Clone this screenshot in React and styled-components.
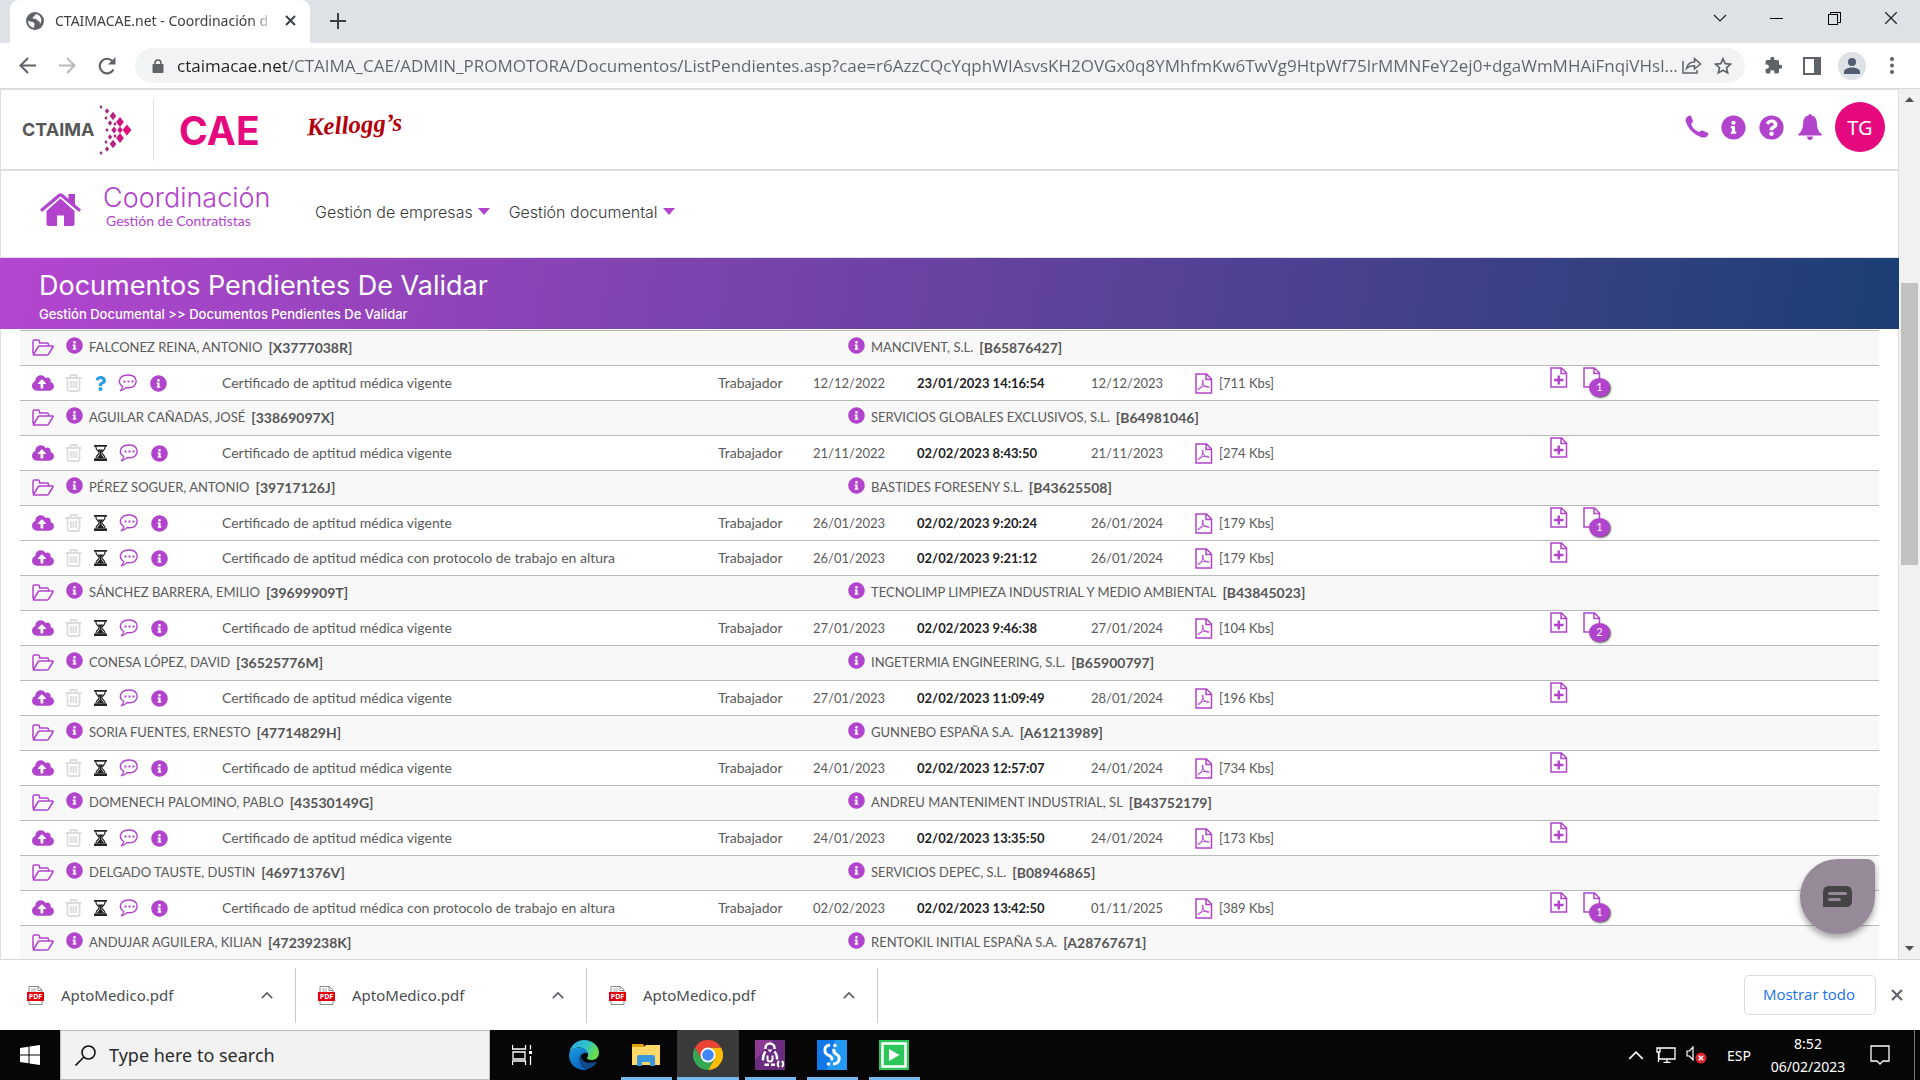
import React from "react";
import styled, { createGlobalStyle, css } from "styled-components";
import {
  FaInfoCircle,
  FaQuestionCircle,
  FaQuestion,
  FaCloudUploadAlt,
} from "react-icons/fa";

const purple = "#b143cc";
const grey = "#5f6368";
const line = "#dedee0";
const uiFont = `"Noto Sans", "Open Sans", sans-serif`;
const bodyFont = `Lato, "Open Sans", sans-serif`;
const headFont = `Inter, Lato, sans-serif`;

const GlobalStyle = createGlobalStyle`
  *, *::before, *::after { box-sizing: border-box; }
  body { margin: 0; background: #fff; color: #555; font-family: ${bodyFont}; font-size: 13px; }
  button { font: inherit; color: inherit; background: none; border: 0; padding: 0; margin: 0; cursor: pointer; }
  a { color: inherit; text-decoration: none; }
  svg { display: block; flex: none; }
  h1, h2, p { margin: 0; font-weight: 400; }
`;

const Screen = styled.div`
  display: flex;
  flex-direction: column;
  height: 100vh;
  overflow: hidden;
`;

/* ---------- browser chrome ---------- */
const TabStrip = styled.div`
  display: flex;
  align-items: stretch;
  height: 43px;
  flex: none;
  padding-left: 10px;
  background: #dee1e6;
  font-family: ${uiFont};
`;
const Tab = styled.div`
  display: flex;
  align-items: center;
  width: 300px;
  padding: 0 12px 2px 16px;
  border-radius: 9px 9px 0 0;
  background: #fff;
  color: #3c4043;
  font-size: 14px;
`;
const TabTitle = styled.span`
  flex: 1;
  margin: 0 8px 0 11px;
  white-space: nowrap;
  mask-image: linear-gradient(90deg, #000 90%, transparent);
`;
const IconButton = styled.button`
  display: flex;
  align-items: center;
  justify-content: center;
  flex: none;
  width: ${(p) => p.$w || 40}px;
  height: ${(p) => p.$h || 35}px;
  color: ${(p) => p.$color || grey};
`;
const Spacer = styled.div`
  flex: 1;
`;
const Toolbar = styled.div`
  display: flex;
  align-items: center;
  height: 46px;
  flex: none;
  padding: 0 8px 0 7px;
  border-bottom: 1px solid #d9dadc;
  background: #fff;
`;
const AddressBar = styled.label`
  display: flex;
  align-items: center;
  flex: 1;
  height: 35px;
  margin: 0 9px 0 8px;
  padding: 0 2px 0 17px;
  border-radius: 18px;
  background: #f1f3f4;
`;
const AddressInput = styled.input`
  flex: 1;
  min-width: 0;
  height: 35px;
  margin-left: 13px;
  padding: 0;
  border: 0;
  outline: 0;
  color: transparent;
  background: linear-gradient(90deg, #202124 111px, #5f6368 111px);
  background-clip: text;
  font-family: "Open Sans", sans-serif;
  font-size: 17px;
`;
const Avatar = styled.span`
  display: flex;
  align-items: center;
  justify-content: center;
  width: 28px;
  height: 28px;
  border-radius: 50%;
  background: #dee1e6;
`;

/* ---------- page ---------- */
const Viewport = styled.div`
  display: flex;
  flex: 1;
  min-height: 0;
`;
const Page = styled.main`
  display: flex;
  flex-direction: column;
  flex: 1;
  min-width: 0;
  overflow: hidden;
`;
const Header = styled.header`
  display: flex;
  align-items: center;
  height: 81px;
  flex: none;
  padding: 0 13px 0 21px;
  border: 1px solid ${line};
`;
const Brand = styled.div`
  display: flex;
  align-items: center;
  gap: 5px;
  width: 132px;
  height: 62px;
  border-right: 1px solid ${line};
  color: #575756;
  font: 700 18px ${headFont};
`;
const Product = styled.span`
  margin-left: 25px;
  padding-top: 2px;
  color: #e5087e;
  font: 700 39px ${headFont};
`;
const Client = styled.span`
  margin-left: 47px;
  padding-bottom: 10px;
  color: #b3000c;
  font: italic 700 25px "Liberation Serif", serif;
  transform: rotate(-3deg);
`;
const HeaderTools = styled.div`
  display: flex;
  align-items: center;
  gap: 12px;
  margin-bottom: 5px;
`;
const UserBadge = styled.button`
  width: 50px;
  height: 50px;
  border-radius: 50%;
  background: #e5087e;
  color: #fff;
  font: 400 20px ${uiFont};
`;
const Nav = styled.nav`
  display: flex;
  align-items: center;
  height: 88px;
  flex: none;
  padding: 0 39px 12px;
  border: 1px solid ${line};
`;
const HomeLink = styled.a`
  padding-top: 3px;
`;
const Section = styled.div`
  width: 212px;
  margin-left: 22px;
  padding-bottom: 4px;
  color: ${purple};
`;
const SectionTitle = styled.h2`
  font: 300 27px/30px ${headFont};
`;
const SectionSub = styled.p`
  padding-left: 3px;
  font-size: 14px;
  line-height: 16px;
`;
const MenuButton = styled.button`
  display: flex;
  align-items: center;
  gap: 5px;
  margin: 7px 19px 0 0;
  color: #3a3a3a;
  font: 300 16px/20px ${headFont};
  &::after {
    content: "";
    border: 6px solid transparent;
    border-top: 7px solid ${purple};
    border-bottom: 0;
  }
`;
const Banner = styled.section`
  height: 71px;
  flex: none;
  padding: 11px 39px 0;
  background: linear-gradient(100deg, #b446d0, #1b3f73);
  color: #fff;
`;
const BannerTitle = styled.h1`
  font: 400 27px/34px ${headFont};
`;
const Crumbs = styled.p`
  padding-top: 1px;
  font: 500 13px/20px ${headFont};
`;
const ListArea = styled.section`
  flex: 1;
  min-height: 0;
  overflow: hidden;
  padding: 1px 19px 0;
  border: solid ${line};
  border-width: 0 1px;
`;
const Table = styled.table`
  width: 100%;
  table-layout: fixed;
  border-spacing: 0;
`;
const Row = styled.tr`
  height: 35px;
  background: ${(p) => (p.$group ? "#f8f8f8" : "#fff")};
`;
const Cell = styled.td`
  height: 35px;
  padding: 0 0 ${(p) => (p.$group || p.$large ? 2 : 0)}px ${(p) => (p.$indent ? 47 : 12)}px;
  border-top: 1px solid #b9b9b9;
  white-space: nowrap;
  color: ${(p) => (p.$strong ? "#222" : "#5a5a5a")};
  font-size: ${(p) => (p.$large ? 14 : 13)}px;
  font-weight: ${(p) => (p.$strong ? 700 : 400)};
`;
const Line = styled.div`
  display: flex;
  align-items: center;
  gap: ${(p) => p.$gap}px;
`;
const Tool = styled.button`
  display: flex;
  justify-content: ${(p) => (p.$start ? "flex-start" : "center")};
  width: ${(p) => p.$w}px;
  padding-bottom: ${(p) => (p.$raised ? 4 : 0)}px;
  color: ${(p) => p.$color || purple};
`;
const Code = styled.strong`
  color: #555;
  font-size: 14px;
`;
const Attachments = styled.div`
  display: flex;
  gap: 15px;
  height: 34px;
`;
const AttachButton = styled.button`
  position: relative;
  width: 18px;
  height: 22px;
`;
const Count = styled.span`
  position: absolute;
  left: 6px;
  top: 12px;
  width: 21px;
  height: 19px;
  border-radius: 50%;
  background: ${purple};
  box-shadow: 1px 1px 2px #555;
  color: #fff;
  font-size: 11px;
  line-height: 17px;
  text-align: center;
`;
const ChatButton = styled.button`
  position: fixed;
  right: 45px;
  bottom: 146px;
  display: flex;
  align-items: center;
  justify-content: center;
  width: 75px;
  height: 75px;
  border-radius: 50% 8px 50% 50%;
  background: #978a98;
  box-shadow: 0 4px 6px rgba(0, 0, 0, 0.35);
`;
const ScrollTrack = styled.div`
  display: flex;
  flex-direction: column;
  align-items: center;
  width: 21px;
  background: #f1f1f1;
`;
const ScrollPart = styled.div`
  width: 17px;
  flex: ${(p) => p.$part};
  background: ${(p) => (p.$thumb ? "#c1c1c1" : "transparent")};
`;

/* ---------- downloads ---------- */
const Downloads = styled.footer`
  display: flex;
  align-items: center;
  height: 71px;
  flex: none;
  padding-right: 8px;
  border-top: 1px solid #d5d6d8;
  background: #fff;
  font-family: ${uiFont};
`;
const Download = styled.div`
  display: flex;
  align-items: center;
  width: ${(p) => (p.$first ? 296 : 291)}px;
  height: 55px;
  padding: 0 8px 0 ${(p) => (p.$first ? 27 : 22)}px;
  border-right: 1px solid #c8c9cb;
`;
const FileLink = styled.a`
  display: flex;
  align-items: center;
  flex: 1;
  gap: 17px;
  color: #4a4d51;
  font-size: 15px;
`;
const ShowAll = styled.button`
  width: 132px;
  height: 40px;
  margin-right: 6px;
  padding: 0 2px 2px 0;
  border: 1px solid #dadce0;
  border-radius: 5px;
  color: #1a73e8;
  font-family: "Open Sans", sans-serif;
  font-size: 15px;
`;

/* ---------- taskbar ---------- */
const Taskbar = styled.div`
  display: flex;
  align-items: stretch;
  height: 50px;
  flex: none;
  background: #060606;
  color: #fff;
  font-family: ${uiFont};
`;
const SearchBox = styled.label`
  display: flex;
  align-items: center;
  gap: 13px;
  width: 430px;
  margin-right: 1px;
  padding-left: 14px;
  border: 1px solid #bcbcbc;
  background: #f2f2f2;
`;
const SearchInput = styled.input`
  flex: 1;
  border: 0;
  outline: 0;
  padding: 0;
  background: none;
  font: 400 18px ${uiFont};
  &::placeholder {
    color: #2b2b2b;
    opacity: 1;
  }
`;
const AppButton = styled.button`
  display: flex;
  align-items: center;
  justify-content: center;
  width: 62px;
  height: 50px;
  background: ${(p) => (p.$active ? "#3a3a3a" : "none")} padding-box;
  ${(p) =>
    p.$open &&
    css`
      background-image: linear-gradient(#76b9ed, #76b9ed);
      background-repeat: no-repeat;
      background-position: bottom;
      background-size: ${p.$active ? 62 : 51}px 3px;
    `}
`;
const Language = styled.button`
  margin: 0 19px 0 15px;
  font-size: 14px;
`;
const Clock = styled.time`
  display: flex;
  flex-direction: column;
  justify-content: center;
  width: 76px;
  text-align: center;
  font-size: 14px;
  line-height: 23px;
  white-space: nowrap;
`;
const DesktopEdge = styled.button`
  width: 6px;
  border-left: 1px solid #777;
`;

/* ---------- drawings ---------- */
const Stroke = ({ w, h = w, box, sw = 2, children, ...rest }) => (
  <svg width={w} height={h} viewBox={box || `0 0 ${w} ${h}`} fill="none" stroke="currentColor" strokeWidth={sw} {...rest}>
    {children}
  </svg>
);
const Globe = () => (
  <svg width="18" height="18" viewBox="0 0 18 18">
    <circle cx="9" cy="9" r="9" fill={grey} />
    <path d="M2.2 8.5c2.300 2 4.800.8 6 2.600 1 1.600-.4 2.200 0 4.700C4.500 15.300 2 12.400 2.200 8.500zM10 2c-1.500 1-.8 2.200-2.600 2.800-1.300.5-.8 1.700.4 2 1.700.4 2.600-.2 3.400 1.200.7 1.200 1.600.9 2.400 2.100.5.800.3 1.700-.2 2.600C16.600 9.600 15.900 3.500 10 2z" fill="#fff" />
  </svg>
);
const Cross = ({ size = 11, sw = 2 }) => (
  <Stroke w={size} box="0 0 11 11" sw={sw}><path d="M1 1l9 9M10 1l-9 9" /></Stroke>
);
const Chevron = ({ up, w = 14, sw = 2 }) => (
  <Stroke w={w} h={w / 2 + 1} box="0 0 14 8" sw={sw}><path d={up ? "M1 7l6-6 6 6" : "M1 1l6 6 6-6"} /></Stroke>
);
const BrandMark = () => {
  const dots = [
    [2, 2, 3], [8, 6, 4], [14, 11, 6], [21, 17, 7], [28, 25, 8], [21, 33, 7], [14, 39, 6], [8, 44, 4], [2, 48, 3],
    [7, 13, 3], [11, 18, 4], [15, 25, 5], [11, 32, 4], [7, 37, 3], [8, 25, 3], [16, 19, 3], [16, 31, 3], [21, 25, 5],
  ];
  return (
    <svg width="34" height="50" viewBox="0 0 34 50">
      <defs>
        <linearGradient id="mark" x1="0" x2="34" y1="0" y2="0" gradientUnits="userSpaceOnUse">
          <stop stopColor="#84408a" /><stop offset=".8" stopColor="#e5087e" />
        </linearGradient>
      </defs>
      <path fill="url(#mark)" d={dots.map(([x, y, r]) => `M${x} ${y - r * 0.7}l${r * 0.55} ${r * 0.7}l${-r * 0.55} ${r * 0.7}l${-r * 0.55} ${-r * 0.7}z`).join("")} />
    </svg>
  );
};
const Phone = () => (
  <svg width="24" height="24" viewBox="0 0 24 24" fill={purple}>
    <path d="M1.500 2.500C3 1 5.500 0 6 1l2 5c.3 1-1.600 2-1.800 3 .7 3.400 4.500 7 8 8 1.200 0 2.300-2 3.300-1.600L23 18c1 .6.300 2-.7 3-1.200 1.300-3.300 1.900-5.300 1.400C9 20 2.500 13 .8 6.200.5 4.800.7 3.300 1.500 2.500z" />
  </svg>
);
const Bell = () => (
  <svg width="24" height="26" viewBox="0 0 24 26" fill={purple}>
    <path d="M12 0q1.500 0 1.500 1.600C17 2.300 18.600 5 18.800 8c.2 6 1.200 9.500 5 12.200q.3 1.300-1 1.300H1.200q-1.300 0-1-1.300C4 17.500 5 14 5.200 8 5.400 5 7 2.300 10.500 1.600 10.500.5 11 0 12 0z" />
    <path d="M9 22.500h6q-.4 3.500-3 3.500t-3-3.500z" />
  </svg>
);
const House = () => (
  <svg width="41" height="34" viewBox="0 0 41 34" fill={purple}>
    <path d="M20.500 5.500L34.500 18v13q0 2-2 2H24V22.500h-7V33H8.500q-2 0-2-2V18z" />
    <path d="M0 16.500L18 1.200q2.500-2 5 0L28.500 6V1H35v10.500l6 5-1.800 2.500L20.500 3.500 2 19z" />
  </svg>
);
const Folder = () => (
  <Stroke w={22} h={17} sw={1.5} strokeLinejoin="round"><path d="M1 14.500V2.500Q1 1 2.500 1H6q1.500 0 1.500 1.500V4H15q1.500 0 1.500 1.500V7M1.500 15.500L6 8q.6-1 1.800-1H20.500q1 0 .4 1L17 14.500q-.7 1.500-2 1.500H2q-1 0-.5-.5z" /></Stroke>
);
const Trash = () => (
  <Stroke w={17} h={18} sw={1.8}><path d="M.5 4h16M5.500 3.500V1h6v2.500M2.500 4.500V15q0 2 2 2h8q2 0 2-2V4.500M5.800 7v7M8.500 7v7M11.200 7v7" /></Stroke>
);
const Hourglass = () => (
  <svg width="13" height="16" viewBox="0 0 13 16" fill="#222">
    <path d="M0 0h13v1.800H0zM0 13.500h13V16H0z" />
    <path d="M1.800 1.500c0 4 3.200 4.500 3.500 6.300-.3 1.700-3.500 2.200-3.500 6M11.200 1.500c0 4-3.200 4.500-3.500 6.300.3 1.700 3.500 2.200 3.500 6" fill="none" stroke="#222" strokeWidth="1.200" />
    <path d="M3.500 4.500h6L7 7.200V9l3.500 4.500h-8L6 9V7.200z" />
  </svg>
);
const Comment = () => (
  <Stroke w={21} h={18} sw={1.4}>
    <path d="M4.800 12.500C-1 9 .5 1.200 10.500 1S21 13.500 10.500 13.800c-1 0-1.800 0-2.500-.2-1.500 1.800-3.500 2.800-6 3.200 1.500-1 2.600-2.600 2.800-4.300z" />
    <path d="M5.500 7.500h2M9.500 7.500h2M13.500 7.500h2" strokeWidth="2" />
  </Stroke>
);
const Sheet = ({ kind }) => (
  <Stroke w={18} h={21} sw={1.5} color={purple}>
    <path d="M1 1h10.500L16.500 6v14H1zM11 1v5.500h5.500" />
    {kind === "plus" && <path d="M4 13h9.500M8.750 8.500v9" strokeWidth="2.400" />}
    {kind === "pdf" && <path d="M7.500 7c1.500 0 0 4.500-1 6.500S3.500 17.500 3 16.500s3-2.500 5.500-3 5.500-.3 5.500.6-3.500-.1-5-2S7 7 7.500 7z" strokeWidth="1" />}
  </Stroke>
);
const PdfFile = () => (
  <svg width="17" height="19" viewBox="0 0 17 19">
    <path d="M2 .5h9.500L15 4v14.500H2zM11 .5V4.500h4" fill="#fff" stroke="#8a8a8a" />
    <path d="M4 3h5M4 5h5" stroke="#aaa" />
    <path d="M0 6h17v9H0z" fill="#e2000f" />
    <text x="8.500" y="13" fill="#fff" fontFamily="Open Sans" fontWeight="700" fontSize="7" textAnchor="middle">PDF</text>
  </svg>
);
const EdgeLogo = () => (
  <svg width="30" height="30" viewBox="0 0 30 30">
    <defs>
      <linearGradient id="eg" x1="0" x2="1" y2=".4"><stop stopColor="#2aa5ea" /><stop offset=".6" stopColor="#2fc4c8" /><stop offset="1" stopColor="#6bdc4b" /></linearGradient>
      <linearGradient id="eb" x1="0" x2=".6" y1="0" y2="1"><stop stopColor="#1b9de2" /><stop offset="1" stopColor="#0a62bd" /></linearGradient>
    </defs>
    <path d="M.3 13C1.500 5.500 7.500 0 15 0c8.500 0 15 6 15 12.500 0 5-3.500 7.500-7.500 7.500-3.200 0-5-1.200-4.500-2.300 1-1 1.300-2 1-3.500C18 10 14 7.500 10 7.500 5.500 7.500 1.500 10 .3 13z" fill="url(#eg)" />
    <path d="M0 15C.5 10.500 5 7.500 10 7.500c5 0 8.500 3 9 6-2-1.500-6.500-.5-8 3.500-1.500 5 2 11 8 12-1.300.7-3 1-4 1C6.500 30 0 23.500 0 15z" fill="url(#eb)" />
    <path d="M10.500 17c-1.500 5.500 3 10.500 8 12 4-.7 7.500-3.500 9-6.500.4-.8-.3-1.200-1-.8-3.500 2-14 2-14.500-5.700z" fill="#114a8b" />
  </svg>
);
const Explorer = () => (
  <svg width="28" height="24" viewBox="0 0 28 24">
    <path d="M0 1h11l2 3H0z" fill="#e3a000" />
    <path d="M0 4h12l2-2h14v20H0z" fill="#ffd868" />
    <path d="M5 23V14q0-2 2-2h14q2 0 2 2v9h-5v-4h-8v4z" fill="#3a96dd" />
  </svg>
);
const ChromeLogo = () => (
  <svg width="30" height="30" viewBox="0 0 30 30">
    <path d="M15 7.500H28A15 15 0 0 1 15 30l6.500-11.300z" fill="#fbbc05" />
    <path d="M2 7.500A15 15 0 0 0 15 30l6.500-11.300H8.500z" fill="#34a853" />
    <path d="M8.500 18.700L2 7.500A15 15 0 0 1 28 7.500H15z" fill="#ea4335" />
    <circle cx="15" cy="15" r="7.500" fill="#fff" />
    <circle cx="15" cy="15" r="5.800" fill="#4285f4" />
  </svg>
);
const PenguinApp = () => (
  <svg width="30" height="30" viewBox="0 0 30 30" fill="none" stroke="#fff">
    <path d="M0 0h30v30H0z" fill="#6b2c80" stroke="none" />
    <path d="M0 0h18L0 20z" fill="#8e3a94" stroke="none" />
    <path d="M10.500 9V8a4.500 4.500 0 0 1 9 0v1" strokeWidth="2.500" />
    <path d="M12.500 9.500h5L15 12.500z" fill="#fff" stroke="none" />
    <path d="M10.500 11.500q-2.500 3-2.500 7v2M19.500 11.500q2.500 3 2.500 6v2" strokeWidth="2.500" />
    <path d="M12.500 15.500v3.500a2.500 2.500 0 0 0 5 0V15.500" strokeWidth="2" />
    <path d="M9.500 24.800h4.500M16 24.800h4" strokeWidth="2.500" />
    <path d="M24 21q-2.500 3 0 6M27 21q2.500 3 0 6" strokeWidth="2" />
  </svg>
);
const SwirlApp = () => (
  <svg width="30" height="30" viewBox="0 0 30 30" fill="none" stroke="#fff" strokeWidth="3">
    <path d="M0 0h30v30H0z" fill="#1178e8" stroke="none" />
    <path d="M18 0h12v30H10z" fill="#2299f2" stroke="none" />
    <path d="M13 5Q7 6 8 11q0 3 5 5 3 2 1 4" />
    <path d="M17 9q-1 3 2 5 4 2 3 6-1 4-6 4" />
    <circle cx="18" cy="5.500" r="1.800" fill="#fff" stroke="none" />
    <circle cx="11.500" cy="24" r="1.800" fill="#fff" stroke="none" />
  </svg>
);
const PlayApp = () => (
  <svg width="30" height="30" viewBox="0 0 30 30">
    <path d="M0 0h30v30H0z" fill="#2dc65b" />
    <path d="M3.500 3.500h23v23h-23z" fill="none" stroke="#fff" strokeWidth="2.500" />
    <path d="M10 9l10.500 6L10 21z" fill="#fff" />
  </svg>
);

/* ---------- data ---------- */
const cert = "Certificado de aptitud médica vigente";
const certHeight = "Certificado de aptitud médica con protocolo de trabajo en altura";
const groups = [
  ["FALCONEZ REINA, ANTONIO", "X3777038R", "MANCIVENT, S.L.", "B65876427", [[cert, "12/12/2022", "23/01/2023 14:16:54", "12/12/2023", 711, 1, true]]],
  ["AGUILAR CAÑADAS, JOSÉ", "33869097X", "SERVICIOS GLOBALES EXCLUSIVOS, S.L.", "B64981046", [[cert, "21/11/2022", "02/02/2023 8:43:50", "21/11/2023", 274]]],
  ["PÉREZ SOGUER, ANTONIO", "39717126J", "BASTIDES FORESENY S.L.", "B43625508", [
    [cert, "26/01/2023", "02/02/2023 9:20:24", "26/01/2024", 179, 1],
    [certHeight, "26/01/2023", "02/02/2023 9:21:12", "26/01/2024", 179],
  ]],
  ["SÁNCHEZ BARRERA, EMILIO", "39699909T", "TECNOLIMP LIMPIEZA INDUSTRIAL Y MEDIO AMBIENTAL", "B43845023", [[cert, "27/01/2023", "02/02/2023 9:46:38", "27/01/2024", 104, 2]]],
  ["CONESA LÓPEZ, DAVID", "36525776M", "INGETERMIA ENGINEERING, S.L.", "B65900797", [[cert, "27/01/2023", "02/02/2023 11:09:49", "28/01/2024", 196]]],
  ["SORIA FUENTES, ERNESTO", "47714829H", "GUNNEBO ESPAÑA S.A.", "A61213989", [[cert, "24/01/2023", "02/02/2023 12:57:07", "24/01/2024", 734]]],
  ["DOMENECH PALOMINO, PABLO", "43530149G", "ANDREU MANTENIMENT INDUSTRIAL, SL", "B43752179", [[cert, "24/01/2023", "02/02/2023 13:35:50", "24/01/2024", 173]]],
  ["DELGADO TAUSTE, DUSTIN", "46971376V", "SERVICIOS DEPEC, S.L.", "B08946865", [[certHeight, "02/02/2023", "02/02/2023 13:42:50", "01/11/2025", 389, 1]]],
  ["ANDUJAR AGUILERA, KILIAN", "47239238K", "RENTOKIL INITIAL ESPAÑA S.A.", "A28767671", []],
];
const columns = [190, 496, 95, 104, 174, 104, 355];

const GroupRow = ({ group: [person, id, company, cif] }) => (
  <Row $group>
    <Cell colSpan={3} $group>
      <Line $gap={6}>
        <Tool $w={28} $start aria-label="Abrir carpeta"><Folder /></Tool>
        <Tool $w={17} $raised aria-label="Información"><FaInfoCircle size={17} /></Tool>
        <span>{person}</span>
        <Code>[{id}]</Code>
      </Line>
    </Cell>
    <Cell colSpan={5} $group $indent>
      <Line $gap={6}>
        <Tool $w={17} $raised aria-label="Información"><FaInfoCircle size={17} /></Tool>
        <span>{company}</span>
        <Code>[{cif}]</Code>
      </Line>
    </Cell>
  </Row>
);

const DocumentRow = ({ doc: [name, issued, sent, expires, size, notes, query] }) => (
  <Row>
    <Cell>
      <Line $gap={11}>
        <Tool $w={22} aria-label="Subir"><FaCloudUploadAlt size={22} /></Tool>
        <Tool $w={17} $color="#dcdcdc" aria-label="Eliminar"><Trash /></Tool>
        <Tool $w={query ? 14 : 15} $color="#2e9be6" aria-label="Estado">{query ? <FaQuestion size={15} /> : <Hourglass />}</Tool>
        <Tool $w={21} aria-label="Comentarios"><Comment /></Tool>
        <Tool $w={17} aria-label="Información"><FaInfoCircle size={17} /></Tool>
      </Line>
    </Cell>
    <Cell $large>{name}</Cell>
    <Cell $large>Trabajador</Cell>
    <Cell>{issued}</Cell>
    <Cell $strong>{sent}</Cell>
    <Cell>{expires}</Cell>
    <Cell>
      <Line as="a" href="#pdf" $gap={6}><Sheet kind="pdf" />[{size} Kbs]</Line>
    </Cell>
    <Cell>
      <Attachments>
        <AttachButton aria-label="Añadir nota"><Sheet kind="plus" /></AttachButton>
        {notes && <AttachButton aria-label="Notas"><Sheet /><Count>{notes}</Count></AttachButton>}
      </Attachments>
    </Cell>
  </Row>
);

export default function App() {
  return (
    <Screen>
      <GlobalStyle />
      <TabStrip>
        <Tab>
          <Globe />
          <TabTitle>CTAIMACAE.net - Coordinación d</TabTitle>
          <IconButton $w={16} $h={16} $color="#3c4043" aria-label="Cerrar pestaña"><Cross /></IconButton>
        </Tab>
        <IconButton $w={55} $h={42} $color="#3c4043" aria-label="Nueva pestaña">
          <Stroke w={16}><path d="M8 0v16M0 8h16" /></Stroke>
        </IconButton>
        <Spacer />
        <IconButton $w={57} $color="#222" aria-label="Buscar pestañas"><Chevron sw={1.2} /></IconButton>
        <IconButton $w={57} $color="#000" aria-label="Minimizar"><Stroke w={13} sw={1} shapeRendering="crispEdges"><path d="M0 7h13" /></Stroke></IconButton>
        <IconButton $w={57} $color="#000" aria-label="Restaurar"><Stroke w={14} sw={1} shapeRendering="crispEdges"><path d="M1 3h9v10H1zM3 3V1h10v10h-3" /></Stroke></IconButton>
        <IconButton $w={58} $color="#222" aria-label="Cerrar"><Cross size={14} sw={1} /></IconButton>
      </TabStrip>
      <Toolbar>
        <IconButton aria-label="Atrás"><Stroke w={17}><path d="M17 8.500H2M9 1L1.500 8.500 9 16" /></Stroke></IconButton>
        <IconButton $color="#b8babd" aria-label="Adelante"><Stroke w={17}><path d="M0 8.500h15M8 1l7.500 7.500L8 16" /></Stroke></IconButton>
        <IconButton aria-label="Recargar"><Stroke w={18} sw={2.2}><path d="M15.500 12.500A7.300 7.300 0 1 1 14.500 4.200" /><path d="M17.500 0v7.500H10z" fill="currentColor" stroke="none" /></Stroke></IconButton>
        <AddressBar>
          <svg width="12" height="14" viewBox="0 0 12 14"><path d="M3 6V4a3 3 0 0 1 6 0v2" fill="none" stroke={grey} strokeWidth="1.600" /><rect y="5" x=".5" width="11" height="9" rx="1.200" fill={grey} /></svg>
          <AddressInput aria-label="Dirección" readOnly value="ctaimacae.net/CTAIMA_CAE/ADMIN_PROMOTORA/Documentos/ListPendientes.asp?cae=r6AzzCQcYqphWIAsvsKH2OVGx0q8YMhfmKw6TwVg9HtpWf75lrMMNFeY2ej0+dgaWmMHAiFnqiVHsl..." />
          <IconButton $w={22} aria-label="Compartir"><Stroke w={20} h={17} sw={1.5}><path d="M1 4v12h14v-3M4.500 11.500C5.500 7 8 5 12.500 5V1.500L18.500 7l-6 5V8.800C9 8.700 6.500 9.500 4.500 11.500z" /></Stroke></IconButton>
          <IconButton aria-label="Favorito"><Stroke w={18} sw={1.7}><path d="M9 1.800l2.200 4.800 5.200.6-3.900 3.500 1.100 5.200L9 13.200l-4.600 2.700 1.100-5.200L1.600 7.200l5.200-.6z" /></Stroke></IconButton>
        </AddressBar>
        <IconButton $w={38} aria-label="Extensiones">
          <svg width="19" height="19" viewBox="0 0 24 24" fill={grey}><path d="M20.500 11H19V7a2 2 0 0 0-2-2h-4V3.500a2.500 2.500 0 0 0-5 0V5H4a2 2 0 0 0-2 2v3.800h1.500a2.700 2.700 0 0 1 0 5.400H2V20a2 2 0 0 0 2 2h3.800v-1.500a2.700 2.700 0 0 1 5.400 0V22H17a2 2 0 0 0 2-2v-4h1.500a2.500 2.500 0 0 0 0-5z" /></svg>
        </IconButton>
        <IconButton aria-label="Panel lateral"><Stroke w={18} ><path d="M1 1h16v16H1z" /><path d="M11 0h7v18h-7z" fill="currentColor" stroke="none" /></Stroke></IconButton>
        <IconButton aria-label="Perfil">
          <Avatar><svg width="16" height="16" viewBox="0 0 16 16" fill="#515c72"><circle cx="8" cy="4" r="4" /><path d="M0 16v-2c0-3 4-4.500 8-4.500s8 1.500 8 4.500v2z" /></svg></Avatar>
        </IconButton>
        <IconButton aria-label="Menú"><svg width="4" height="17" fill={grey}><circle cx="2" cy="2" r="2" /><circle cx="2" cy="8.500" r="2" /><circle cx="2" cy="15" r="2" /></svg></IconButton>
      </Toolbar>

      <Viewport>
        <Page>
          <Header>
            <Brand>CTAIMA<BrandMark /></Brand>
            <Product>CAE</Product>
            <Client>Kellogg’s</Client>
            <Spacer />
            <HeaderTools>
              <Tool $w={25} aria-label="Teléfono"><Phone /></Tool>
              <Tool $w={25} aria-label="Información"><FaInfoCircle size={25} /></Tool>
              <Tool $w={26} aria-label="Ayuda"><FaQuestionCircle size={25} /></Tool>
              <Tool $w={27} aria-label="Avisos"><Bell /></Tool>
              <UserBadge>TG</UserBadge>
            </HeaderTools>
          </Header>
          <Nav>
            <HomeLink href="#inicio" aria-label="Inicio"><House /></HomeLink>
            <Section>
              <SectionTitle>Coordinación</SectionTitle>
              <SectionSub>Gestión de Contratistas</SectionSub>
            </Section>
            <MenuButton>Gestión de empresas</MenuButton>
            <MenuButton>Gestión documental</MenuButton>
          </Nav>
          <Banner>
            <BannerTitle>Documentos Pendientes De Validar</BannerTitle>
            <Crumbs>Gestión Documental &gt;&gt; Documentos Pendientes De Validar</Crumbs>
          </Banner>
          <ListArea>
            <Table>
              <colgroup>
                {columns.map((w, i) => <col key={i} width={w} />)}
                <col />
              </colgroup>
              <tbody>
                {groups.map((g) => (
                  <React.Fragment key={g[1]}>
                    <GroupRow group={g} />
                    {g[4].map((d) => <DocumentRow key={d[2]} doc={d} />)}
                  </React.Fragment>
                ))}
              </tbody>
            </Table>
          </ListArea>
        </Page>
        <ScrollTrack>
          <IconButton $w={21} $h={21} $color="#505050" aria-label="Subir página"><svg width="9" height="5" fill="currentColor"><path d="M0 5h9L4.500 0z" /></svg></IconButton>
          <ScrollPart $part={173} />
          <ScrollPart $part={282} $thumb />
          <ScrollPart $part={373} />
          <IconButton $w={21} $h={21} $color="#505050" aria-label="Bajar página"><svg width="9" height="5" fill="currentColor"><path d="M0 0h9L4.500 5z" /></svg></IconButton>
        </ScrollTrack>
      </Viewport>
      <ChatButton aria-label="Chat">
        <svg width="29" height="21" viewBox="0 0 29 21"><path d="M6 0h17q6 0 6 6v9q0 6-6 6H0V6q0-6 6-6z" fill="#444" /><path d="M6.500 7.500h16M6.500 13.500h10" stroke="#978a98" strokeWidth="3" strokeLinecap="round" /></svg>
      </ChatButton>

      <Downloads>
        {[0, 1, 2].map((i) => (
          <Download key={i} $first={i === 0}>
            <FileLink href="#descarga"><PdfFile />AptoMedico.pdf</FileLink>
            <IconButton aria-label="Opciones de descarga"><Chevron up w={12} /></IconButton>
          </Download>
        ))}
        <Spacer />
        <ShowAll>Mostrar todo</ShowAll>
        <IconButton $w={30} aria-label="Cerrar descargas"><Cross size={12} /></IconButton>
      </Downloads>

      <Taskbar>
        <IconButton $w={60} $h={50} $color="#fff" aria-label="Start">
          <svg width="20" height="20" viewBox="0 0 20 20" fill="#fff"><path d="M0 3l8.500-1.200v7.700H0zM9.500 1.600L20 0v9.500H9.500zM0 10.500h8.500v7.700L0 17zM9.500 10.500H20V20L9.500 18.400z" /></svg>
        </IconButton>
        <SearchBox>
          <Stroke w={21} sw={1.600} color="#111"><circle cx="13.500" cy="7.500" r="6.500" /><path d="M9 12l-8.500 8.500" /></Stroke>
          <SearchInput placeholder="Type here to search" aria-label="Type here to search" />
        </SearchBox>
        <AppButton aria-label="Task view"><Stroke w={20} sw={1.300}><path d="M.5 0v4h13V0M.5 20v-4h13v4M1 7h12v7H1zM18.500 0v4.500M18.500 11v9" /><path d="M17 6h3v3h-3z" fill="#fff" stroke="none" /></Stroke></AppButton>
        <AppButton aria-label="Edge"><EdgeLogo /></AppButton>
        <AppButton $open aria-label="Explorer"><Explorer /></AppButton>
        <AppButton $open $active aria-label="Chrome"><ChromeLogo /></AppButton>
        <AppButton $open aria-label="App"><PenguinApp /></AppButton>
        <AppButton $open aria-label="App"><SwirlApp /></AppButton>
        <AppButton $open aria-label="App"><PlayApp /></AppButton>
        <Spacer />
        <IconButton $w={32} $h={50} $color="#fff" aria-label="Hidden icons"><Chevron up w={16} sw={1.300} /></IconButton>
        <IconButton $w={28} $h={50} $color="#fff" aria-label="Network"><Stroke w={20} h={16} sw={1.300}><path d="M4 1h15v11H3V6M11 12v3M7.500 15.300h7M1 1h3v4H1zM2.500 5v10" /></Stroke></IconButton>
        <IconButton $w={32} $h={50} $color="#fff" aria-label="Volume"><Stroke w={21} h={18} sw={1.200}><path d="M1 5h2.500L7 1v13l-3.500-4H1z" /><circle cx="15" cy="12" r="5.500" fill="#d9232e" stroke="none" /><path d="M12.800 9.800l4.400 4.400M17.200 9.800l-4.400 4.400" strokeWidth="1.500" /></Stroke></IconButton>
        <Language>ESP</Language>
        <Clock><span>8:52</span><span>06/02/2023</span></Clock>
        <IconButton $w={68} $h={50} $color="#fff" aria-label="Notifications"><Stroke w={20} sw={1.300}><path d="M1 1h18v15h-6l-3 3-3-3H1z" /></Stroke></IconButton>
        <DesktopEdge aria-label="Show desktop" />
      </Taskbar>
    </Screen>
  );
}
